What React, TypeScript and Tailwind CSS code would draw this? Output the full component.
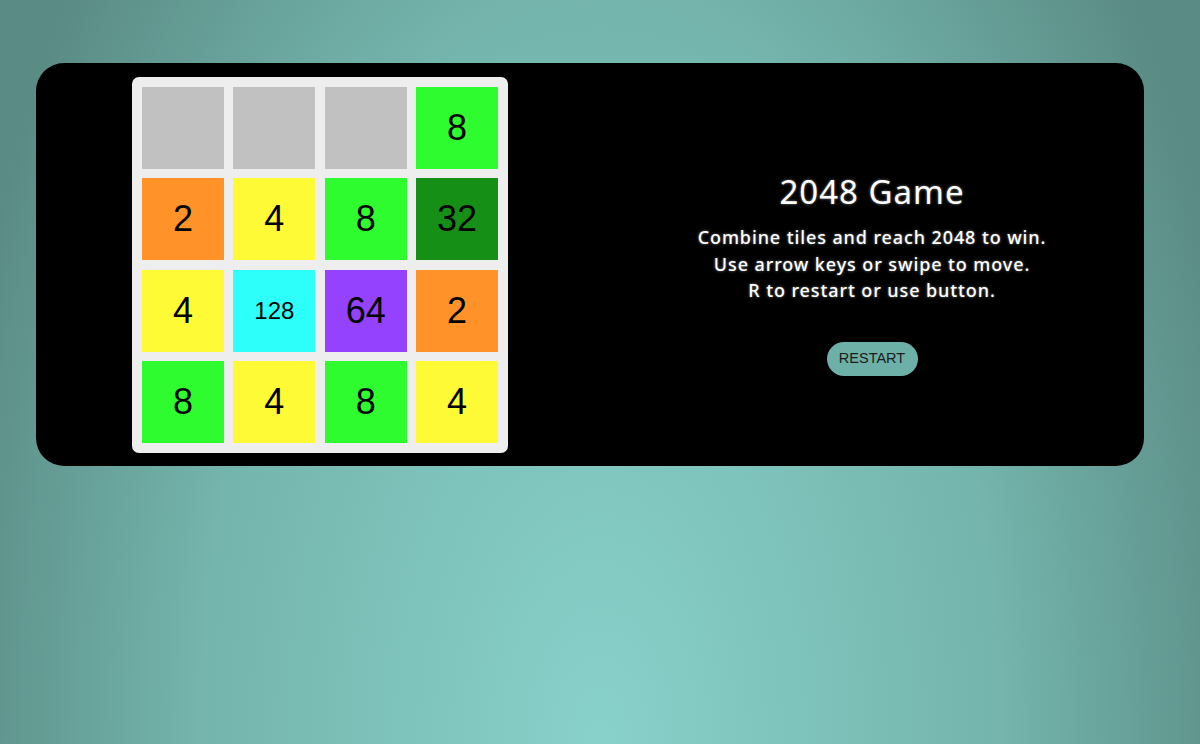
const board: (number | null)[][] = [
  [null, null, null, 8],
  [2, 4, 8, 32],
  [4, 128, 64, 2],
  [8, 4, 8, 4],
];

const tileColors: Record<number, string> = {
  2: "bg-[#ff9229]",
  4: "bg-[#fffa36]",
  8: "bg-[#2efc2e]",
  32: "bg-[#168f16]",
  64: "bg-[#9542fe]",
  128: "bg-[#2dfffb]",
};

function Tile({ value }: { value: number | null }) {
  if (value === null) {
    return <div className="h-[82px] bg-[#c1c1c1]" />;
  }
  return (
    <div
      className={`h-[82px] flex items-center justify-center text-black font-['Liberation_Sans',Arial,sans-serif] ${
        tileColors[value]
      } ${value >= 100 ? "text-[24px]" : "text-[36px]"}`}
    >
      {value}
    </div>
  );
}

export default function App() {
  return (
    <div className="min-h-[744px] w-full pt-[63px] bg-[radial-gradient(ellipse_700px_1300px_at_50%_100%,#88d1ca_0%,#74b5ad_57%,#5a8c85_95%)]">
      <div className="ml-[36px] w-[1108px] h-[403px] bg-black rounded-[28px] flex pl-[96px] pt-[14px]">
        <div className="w-[376px] h-[376px] bg-[#eeeeee] rounded-[7px] p-[10px] grid grid-cols-4 gap-[9.3px]">
          {board.flat().map((v, i) => (
            <Tile key={i} value={v} />
          ))}
        </div>

        <div className="ml-[92px] flex-1 flex flex-col items-center pt-[97px] text-white font-['Noto_Sans',sans-serif] [text-shadow:0_0_3px_rgba(160,160,160,0.8)]">
          <h1 className="text-[33px] leading-[36px] tracking-[1px]">
            2048 Game
          </h1>
          <p className="mt-[14px] text-[18px] leading-[26.5px] tracking-[0.9px] text-center font-medium">
            Combine tiles and reach 2048 to win.
            <br />
            Use arrow keys or swipe to move.
            <br />
            R to restart or use button.
          </p>
          <button className="mt-[38px] w-[91px] h-[34px] rounded-full bg-[#6cb0a8] text-[#1b1b1b] text-[14.5px] font-['Liberation_Sans',Arial,sans-serif] [text-shadow:none]">
            RESTART
          </button>
        </div>
      </div>
    </div>
  );
}
